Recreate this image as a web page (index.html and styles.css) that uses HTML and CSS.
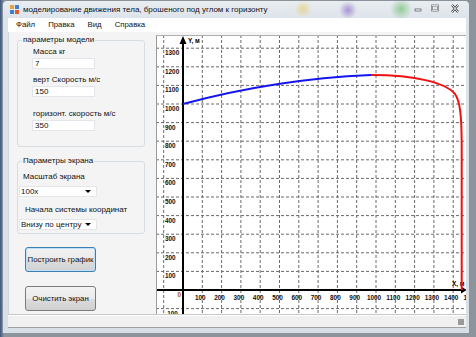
FILE: index.html
```html
<!DOCTYPE html>
<html lang="ru">
<head>
    <meta charset="UTF-8">
    <title>моделирование движения тела</title>
    <link rel="stylesheet" href="styles.css">
</head>
<body>
    <div class="window">
        <div class="titlebar">
            <svg class="app-icon" width="9" height="9" viewBox="0 0 9 9">
                <rect x="0" y="0" width="4" height="4" fill="#e8a33c"/>
                <rect x="5" y="0" width="4" height="4" fill="#3f7fd6"/>
                <rect x="0" y="5" width="4" height="4" fill="#3f7fd6"/>
                <rect x="5" y="5" width="4" height="4" fill="#e45a2a"/>
            </svg>
            <span class="title">моделирование движения тела, брошеного под углом к горизонту</span>
            <div class="controls">
                <svg width="12" height="9" viewBox="0 0 12 9"><rect x="3" y="5" width="6" height="2" fill="#fff" stroke="#333" stroke-width="0.6"/></svg>
                <svg width="12" height="9" viewBox="0 0 12 9"><rect x="3" y="1.5" width="6" height="5" fill="none" stroke="#333" stroke-width="1.6"/><rect x="3" y="1.5" width="6" height="5" fill="none" stroke="#fff" stroke-width="0.8"/></svg>
                <svg width="18" height="9" viewBox="0 0 18 9"><path d="M6 1 L12 8 M12 1 L6 8" stroke="#333" stroke-width="2.2"/><path d="M6 1 L12 8 M12 1 L6 8" stroke="#fff" stroke-width="1"/></svg>
            </div>
        </div>
        <div class="menubar">
            <span>Файл</span>
            <span>Правка</span>
            <span>Вид</span>
            <span>Справка</span>
        </div>
        <div class="client">
            <div class="side">
                <fieldset class="group model">
                    <legend>параметры модели</legend>
                    <div class="lbl first">Масса кг</div>
                    <div class="field">7</div>
                    <div class="lbl second">верт Скорость м/с</div>
                    <div class="field">150</div>
                    <div class="lbl third">горизонт. скорость м/с</div>
                    <div class="field">350</div>
                </fieldset>
                <fieldset class="group screen">
                    <legend>Параметры экрана</legend>
                    <div class="lbl scale">Масштаб экрана</div>
                    <div class="combo">100x<span class="arrow"></span></div>
                    <div class="lbl origin">Начала системы координат</div>
                    <div class="combo">Внизу по центру<span class="arrow"></span></div>
                </fieldset>
                <button class="btn focused">Построить график</button>
                <button class="btn second-btn">Очистить экран</button>
            </div>
            <div class="chart">
                <svg width="311" height="279" viewBox="0 0 311 279">
                    <g id="grid" stroke="#6a6a6a" stroke-width="1" stroke-dasharray="3 2"></g>
                    <g id="labels" font-family="Liberation Sans, Arial, sans-serif" font-size="6.4" font-weight="bold" fill="#111"></g>
                    <line x1="0" y1="255" x2="306" y2="255" stroke="#000" stroke-width="2"/>
                    <path d="M305 251.5 L311 255 L305 258.5 Z" fill="#000"/>
                    <line x1="27" y1="8" x2="27" y2="279" stroke="#000" stroke-width="2"/>
                    <path d="M23.5 9 L27 1 L30.5 9 Z" fill="#000"/>
                    <text x="32" y="8" font-family="Liberation Sans, Arial, sans-serif" font-size="6.4" font-weight="bold">Y, м</text>
                    <text x="296" y="251" font-family="Liberation Sans, Arial, sans-serif" font-size="6.4" font-weight="bold">X, м</text>
                    <path d="M27 69 Q120 44 215 40" fill="none" stroke="#1414f0" stroke-width="2"/>
                    <path d="M215 40 C260 40 290 48 299 59 C304 66 305.6 80 305.7 110 L305.7 255" fill="none" stroke="#f01010" stroke-width="2"/>
                </svg>
            </div>
        </div>
        <div class="statusbar"><span class="grip"></span></div>
    </div>
    <script>
        var ns = "http://www.w3.org/2000/svg";
        var grid = document.getElementById("grid");
        var labels = document.getElementById("labels");
        var dx = 19.3, dy = 18.6, ox = 27, oy = 255;

        function add(parent, tag, attrs, text) {
            var el = document.createElementNS(ns, tag);
            for (var k in attrs) el.setAttribute(k, attrs[k]);
            if (text) el.textContent = text;
            parent.appendChild(el);
        }

        for (var i = -1; i <= 15; i++) {
            var x = ox + i * dx;
            if (i !== 0) add(grid, "line", {x1: x, y1: 0, x2: x, y2: 279});
            if (i > 0) add(labels, "text", {x: x - 2, y: 264.5, "text-anchor": "middle"}, String(i * 100));
        }
        for (var j = -1; j <= 13; j++) {
            var y = oy - j * dy;
            if (j !== 0) add(grid, "line", {x1: 0, y1: y, x2: 311, y2: y});
            if (j !== 0) add(labels, "text", {x: 9, y: y + 7}, String(j * 100));
        }
        add(labels, "text", {x: 25, y: 262, "text-anchor": "end", fill: "#b05000"}, "0");
    </script>
</body>
</html>
```

FILE: styles.css
```css
body {
    margin: 0;
    width: 476px;
    height: 337px;
    overflow: hidden;
    background: linear-gradient(90deg, #3b5680 0, #8d949b 4px, #8d949b 100%);
    font-family: "Liberation Sans", Arial, sans-serif;
    font-size: 8px;
    color: #111;
}
.window {
    margin-left: 2px;
    width: 468px;
    height: 333px;
    box-sizing: border-box;
    padding: 0 3px 5px 5px;
    display: flex;
    flex-direction: column;
    border-radius: 5px 5px 0 0;
    background:
        radial-gradient(circle at 300px 8px, rgba(230, 200, 90, 0.55) 0, rgba(230, 200, 90, 0) 9px),
        radial-gradient(circle at 345px 9px, rgba(120, 80, 190, 0.55) 0, rgba(120, 80, 190, 0) 9px),
        radial-gradient(circle at 398px 8px, rgba(80, 180, 80, 0.55) 0, rgba(80, 180, 80, 0) 11px),
        linear-gradient(#e9edf1, #dde3ea 18px, #d9dfe6 100%);
    border: 1px solid #8a939c;
    border-bottom: none;
}
.titlebar {
    height: 17px;
    display: flex;
    align-items: center;
}
.app-icon {
    margin: 0 4px 0 2px;
}
.title {
    font-size: 8px;
    color: #111;
}
.controls {
    margin-left: auto;
    margin-right: 2px;
    display: flex;
    gap: 5px;
    align-self: flex-start;
    margin-top: 3px;
}
.menubar {
    height: 15px;
    background: #fff;
    display: flex;
    align-items: center;
    padding-left: 8px;
    gap: 13px;
    font-size: 7.8px;
}
.client {
    height: 283px;
    display: flex;
    background: #f4f4f4;
    border-left: 1px solid #d0d6dd;
}
.side {
    width: 148px;
    display: flex;
    flex-direction: column;
    align-items: flex-start;
}
.group {
    box-sizing: border-box;
    width: 128px;
    margin: 3px 0 0 8px;
    padding: 0 0 0 14px;
    border: 1px solid #d6dde3;
    border-radius: 3px;
    min-width: 0;
}
.group legend {
    padding: 0 1px;
    margin-left: -10px;
    line-height: 10px;
    font-size: 8px;
}
.model {
    height: 112px;
}
.screen {
    height: 78px;
    margin-top: 9px;
    padding-left: 1px;
}
.screen legend {
    margin-left: 3px;
}
.lbl {
    line-height: 10px;
    margin-left: 1px;
}
.first { margin-top: 2px; }
.second { margin-top: 6px; }
.third { margin-top: 12px; }
.scale { margin-top: 6px; margin-left: 4px; }
.origin { margin-top: 8px; margin-left: 6px; }
.field {
    box-sizing: border-box;
    width: 63px;
    height: 11px;
    margin-top: 1px;
    background: #fff;
    border: 1px solid #e2e6ea;
    line-height: 9px;
    padding-left: 2px;
}
.combo {
    box-sizing: border-box;
    width: 78px;
    height: 11px;
    margin-top: 4px;
    background: #fff;
    border: 1px solid #e6e6e6;
    line-height: 9px;
    padding-left: 1px;
    display: flex;
    align-items: center;
}
.arrow {
    margin-left: auto;
    margin-right: 5px;
    border-left: 3px solid transparent;
    border-right: 3px solid transparent;
    border-top: 3px solid #000;
}
.btn {
    width: 71px;
    height: 25px;
    margin: 13px 0 0 16px;
    padding: 0;
    font-family: "Liberation Sans", Arial, sans-serif;
    font-size: 7.8px;
    color: #111;
    border: 1px solid #7a7a7a;
    border-radius: 3px;
    background: linear-gradient(#f3f3f3 0, #ebebeb 50%, #dddddd 51%, #cfcfcf 100%);
}
.focused {
    border-color: #3c7fb1;
    background: linear-gradient(#f2f2f2 0, #eaeaea 50%, #dcdcdc 51%, #d2d2d2 100%);
    box-shadow: inset 0 0 0 1px #bfe0f5;
}
.second-btn {
    margin-top: 14px;
}
.chart {
    margin-top: 3px;
    width: 311px;
    height: 279px;
    background: #fff;
    border-left: 1px solid #9a9a9a;
    border-top: 1px solid #b0b0b0;
    box-sizing: border-box;
    overflow: hidden;
}
.chart svg {
    display: block;
    margin: -1px 0 0 -1px;
}
.statusbar {
    height: 12px;
    background: #f0f0f0;
    border-top: 1px solid #c8c8c8;
    border-bottom: 1px solid #a0a0a0;
    box-shadow: inset 0 1px 0 #fff;
    display: flex;
    justify-content: flex-end;
    align-items: flex-end;
}
.grip {
    width: 6px;
    height: 6px;
    margin: 0 2px 2px 0;
    background: radial-gradient(circle, #9a9a9a 0.8px, transparent 1px) 0 0 / 2px 2px;
}
```
